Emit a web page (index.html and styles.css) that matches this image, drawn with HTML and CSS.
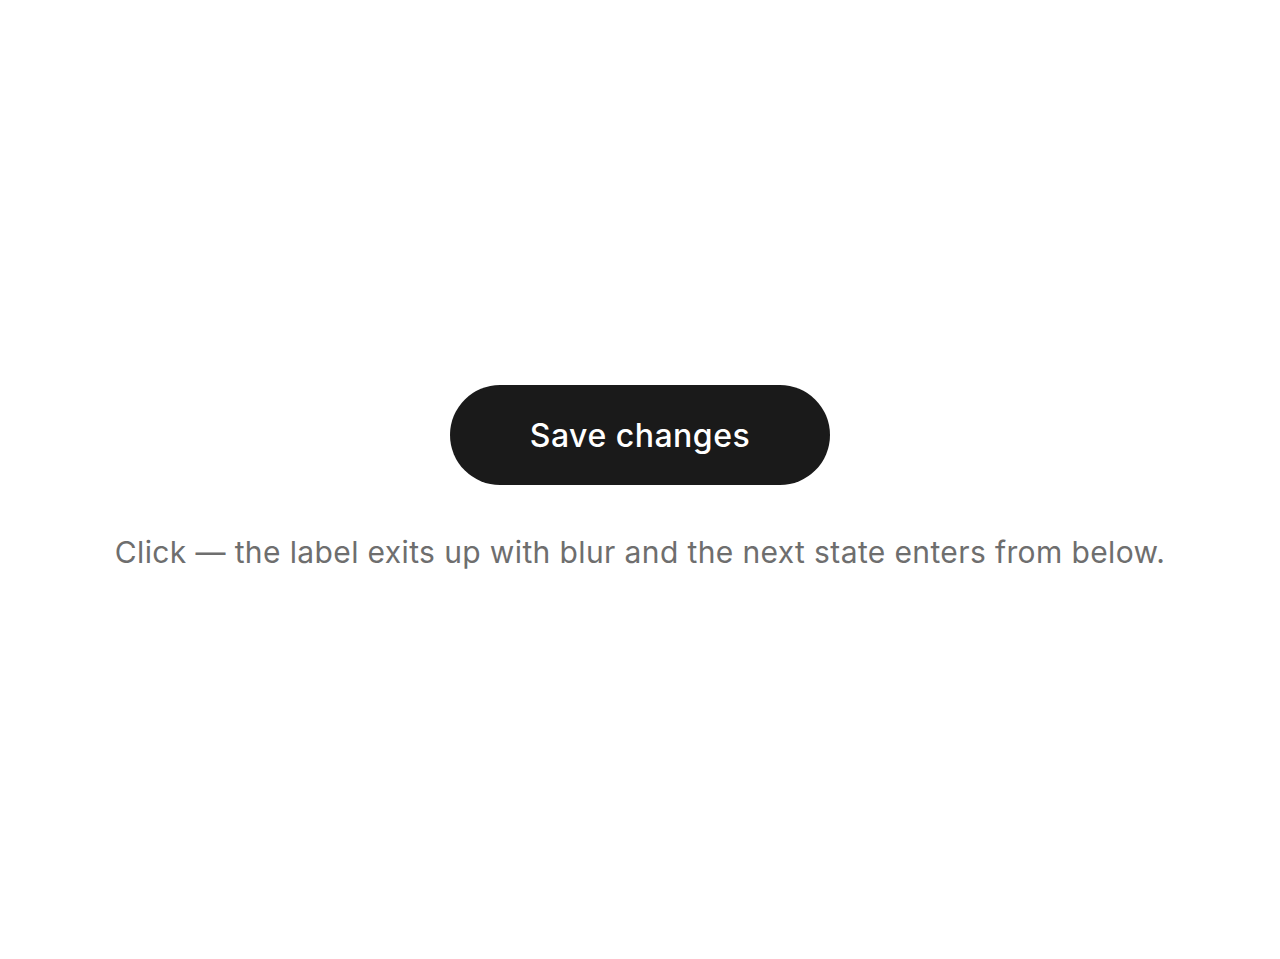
FILE: index.html
```html
<!DOCTYPE html>
<html lang="en">
<head>
<meta charset="utf-8">
<title>Save changes</title>
<link rel="stylesheet" href="styles.css">
</head>
<body>
<main class="stage">
  <button class="save-btn" type="button"><span class="label">Save changes</span></button>
  <p class="hint">Click — the label exits up with blur and the next state enters from below.</p>
</main>
</body>
</html>
```
FILE: styles.css
```css
html, body {
  margin: 0;
  padding: 0;
  height: 100%;
  background: #ffffff;
}
body {
  font-family: Inter, "Noto Sans", sans-serif;
}
.stage {
  min-height: 100vh;
  box-sizing: border-box;
  padding-bottom: 2px;
  display: flex;
  flex-direction: column;
  align-items: center;
  justify-content: center;
  gap: 46px;
}
.save-btn {
  width: 380px;
  height: 100px;
  border-radius: 50px;
  border: none;
  background: #1a1a1a;
  color: #ffffff;
  font-family: Inter, "Noto Sans", sans-serif;
  font-size: 32px;
  font-weight: 500;
  letter-spacing: 0.5px;
  cursor: pointer;
  padding: 2px 0 0;
}
.hint {
  margin: 0;
  font-size: 30px;
  line-height: 1.4;
  letter-spacing: 0.38px;
  color: #6e6e6e;
}
```
